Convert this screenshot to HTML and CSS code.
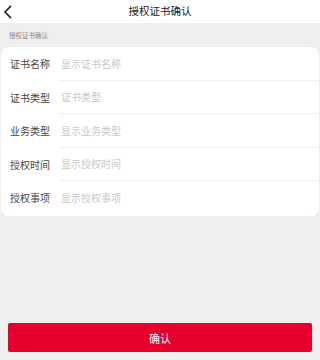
FILE: index.html
```html
<!DOCTYPE html>
<html lang="zh">
<head>
<meta charset="utf-8">
<meta name="viewport" content="width=device-width, initial-scale=1">
<link rel="stylesheet" href="styles.css">
</head>
<body>
<div class="page">
  <header class="topbar">
    <span class="back">
      <svg width="10" height="14" viewBox="0 0 10 14"><path d="M7.5 1.5 L2 7 L7.5 12.5" fill="none" stroke="#222" stroke-width="1.6" stroke-linecap="square"/></svg>
    </span>
    <h1 class="title">授权证书确认</h1>
  </header>
  <div class="section-label">授权证书确认</div>
  <div class="card">
    <div class="row"><span class="label">证书名称</span><span class="value">显示证书名称</span></div>
    <div class="row"><span class="label">证书类型</span><span class="value">证书类型</span></div>
    <div class="row"><span class="label">业务类型</span><span class="value">显示业务类型</span></div>
    <div class="row"><span class="label">授权时间</span><span class="value">显示授权时间</span></div>
    <div class="row last"><span class="label">授权事项</span><span class="value">显示授权事项</span></div>
  </div>
  <div class="spacer"></div>
  <div class="footer">
    <button class="confirm">确认</button>
  </div>
</div>
</body>
</html>
```
FILE: styles.css
```css
* { box-sizing: border-box; margin: 0; padding: 0; }
html, body { width: 100%; height: 100%; overflow: hidden; }
body {
  background: #efefef;
  font-family: "Noto Sans CJK SC", "Noto Sans", sans-serif;
  color: #333;
}
.page { display: flex; flex-direction: column; height: 100vh; }
.topbar {
  position: relative;
  height: 23px;
  background: #fff;
  display: flex;
  align-items: center;
  justify-content: center;
}
.back {
  position: absolute;
  left: 3px;
  top: 5px;
  display: flex;
}
.title {
  font-size: 10.5px;
  font-weight: normal;
  color: #222;
  line-height: 1;
}
.section-label {
  height: 24px;
  display: flex;
  align-items: center;
  padding-left: 9px;
  font-size: 6.5px;
  color: #888;
}
.card {
  background: #fff;
  margin: 0 1px;
  border-radius: 8px;
  padding-bottom: 1px;
}
.row {
  display: flex;
  height: 33.5px;
  align-items: stretch;
}
.label {
  width: 58px;
  padding-left: 9px;
  display: flex;
  align-items: center;
  font-size: 10px;
  color: #444;
}
.value {
  flex: 1;
  display: flex;
  align-items: center;
  padding-left: 2px;
  font-size: 10px;
  color: #c8c8c8;
  border-bottom: 1px solid #f0f0f0;
}
.row.last .value { border-bottom: none; }
.spacer { flex: 1; }
.footer { padding: 0 8px 8px 8px; }
.confirm {
  width: 100%;
  height: 29px;
  border: none;
  border-radius: 2px;
  background: #e6002d;
  color: #fff;
  font-family: "Noto Sans CJK SC", sans-serif;
  font-size: 11px;
}
```
